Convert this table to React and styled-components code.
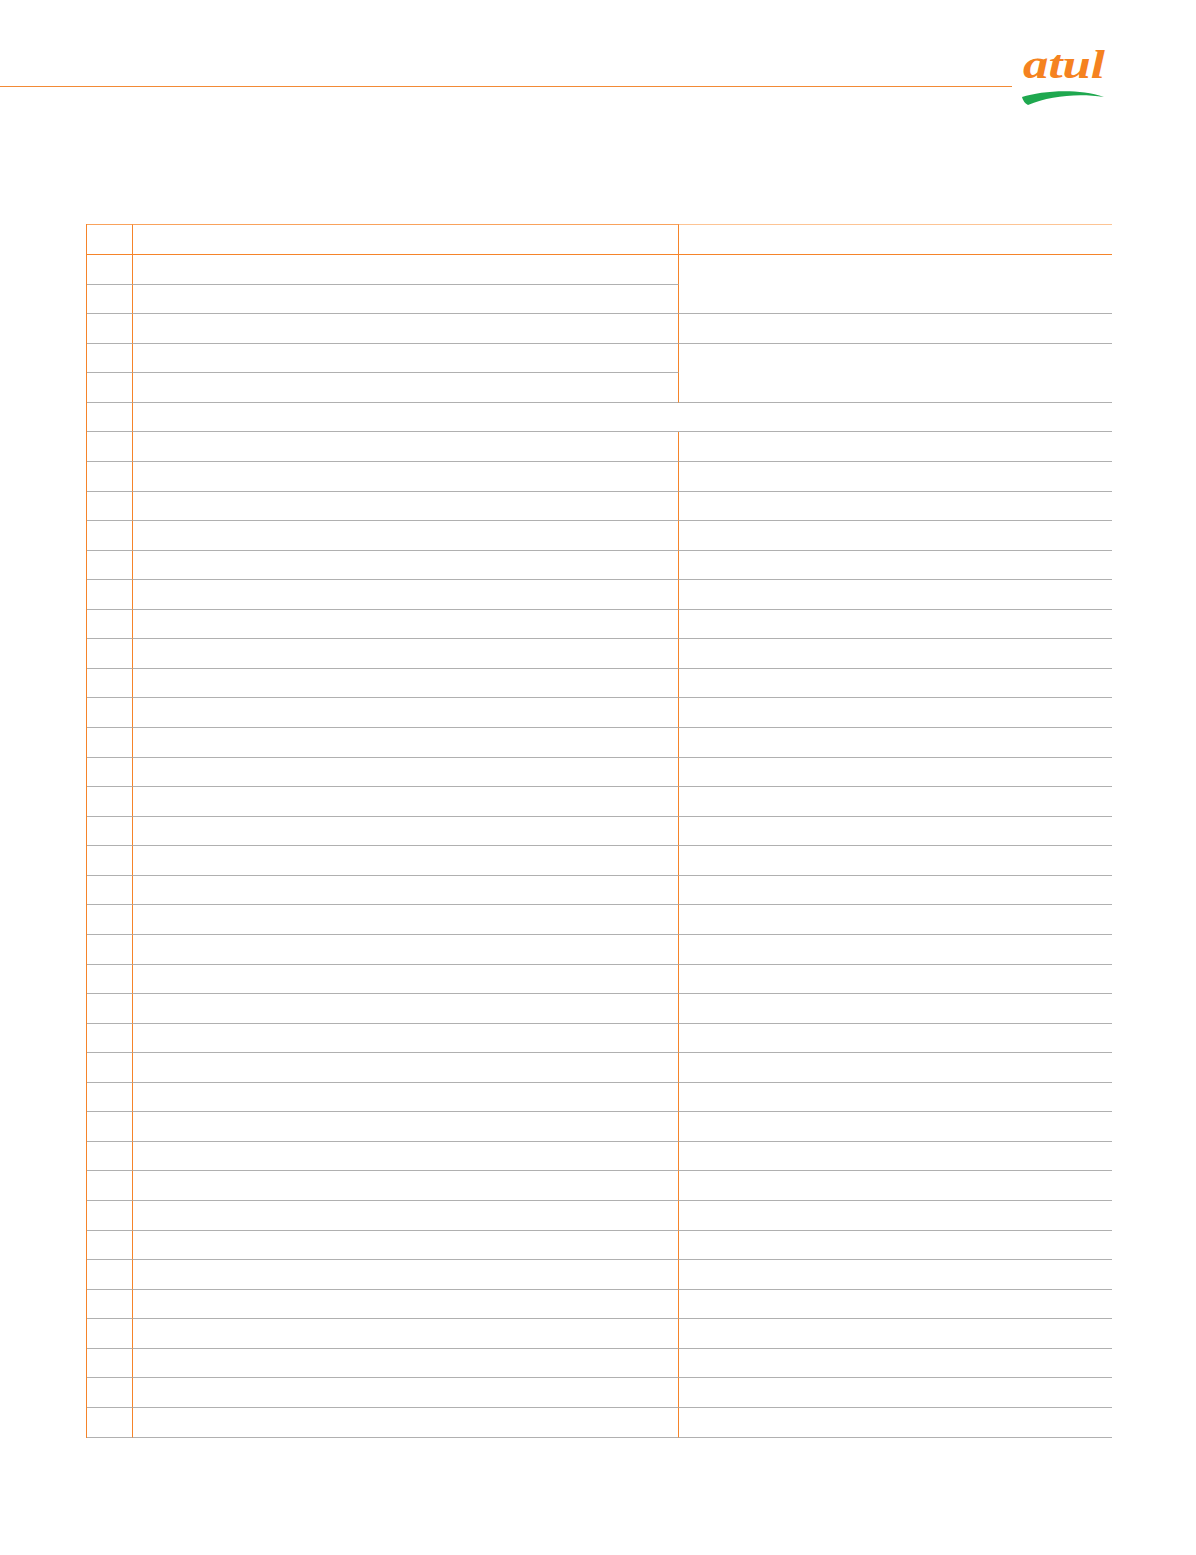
import React from "react";
import styled, { createGlobalStyle } from "styled-components";

const Global = createGlobalStyle`
  html, body { margin: 0; padding: 0; background: #ffffff; }
  body { font-family: "Liberation Sans", Arial, sans-serif; }
`;

const Page = styled.div`
  width: 1196px;
  min-height: 1555px;
  background: #ffffff;
`;

const Header = styled.header`
  display: flex;
  align-items: flex-start;
  height: 109px;
`;

const Rule = styled.div`
  flex: 1;
  height: 1px;
  margin-top: 86px;
  background: #f28a36;
`;

const Logo = styled.svg`
  display: block;
  width: 98px;
  height: 69px;
  margin-top: 38px;
  margin-right: 86px;
  flex: none;
  overflow: visible;
`;

const Grid = styled.div`
  display: grid;
  grid-template-columns: 46px 546px 433px;
  grid-template-rows: 31px repeat(40, 29.575px);
  width: 1026px;
  margin: 115px 0 0 86px;
  border-left: 1px solid #f5842a;
  box-sizing: border-box;
`;

const Cell = styled.div`
  box-sizing: border-box;
  border-bottom: 1px solid ${(p) => (p.$head ? "#f5842a" : "#b0b0b0")};
  border-right: ${(p) => (p.$divider ? "1px solid #f5842a" : "none")};
  grid-column: ${(p) => (p.$colSpan ? `span ${p.$colSpan}` : "auto")};
  grid-row: ${(p) => (p.$rowSpan ? `span ${p.$rowSpan}` : "auto")};
  ${(p) => p.$head && `border-top: 1px solid ${p.$topColor};`}
`;

function Row({ index }) {
  const cells = [<Cell key="n" $divider />];
  if (index === 5) {
    cells.push(<Cell key="m" $colSpan={2} />);
    return cells;
  }
  cells.push(<Cell key="d" $divider />);
  if (index === 0 || index === 3) {
    cells.push(<Cell key="v" $rowSpan={2} />);
  } else if (index !== 1 && index !== 4) {
    cells.push(<Cell key="v" />);
  }
  return cells;
}

export default function App() {
  const rows = Array.from({ length: 40 }, (_, i) => i);
  return (
    <Page>
      <Global />
      <Header>
        <Rule />
        <Logo viewBox="0 0 98 69">
          <text
            x="11"
            y="39.5"
            textLength="82"
            lengthAdjust="spacingAndGlyphs"
            fill="#f58220"
            fontFamily="'Liberation Serif', 'DejaVu Serif', serif"
            fontStyle="italic"
            fontWeight="700"
            fontSize="40"
          >
            atul
          </text>
          <path
            d="M10,59 C30,53 65,50 92,59 C65,55 38,58 16,67 Q11,64 10,59 Z"
            fill="#1fa84f"
          />
        </Logo>
      </Header>
      <Grid>
        <Cell $head $divider $topColor="#f9a25c" />
        <Cell $head $divider $topColor="#f9a25c" />
        <Cell $head $topColor="#fdc494" />
        {rows.map((i) => (
          <Row key={i} index={i} />
        ))}
      </Grid>
    </Page>
  );
}
